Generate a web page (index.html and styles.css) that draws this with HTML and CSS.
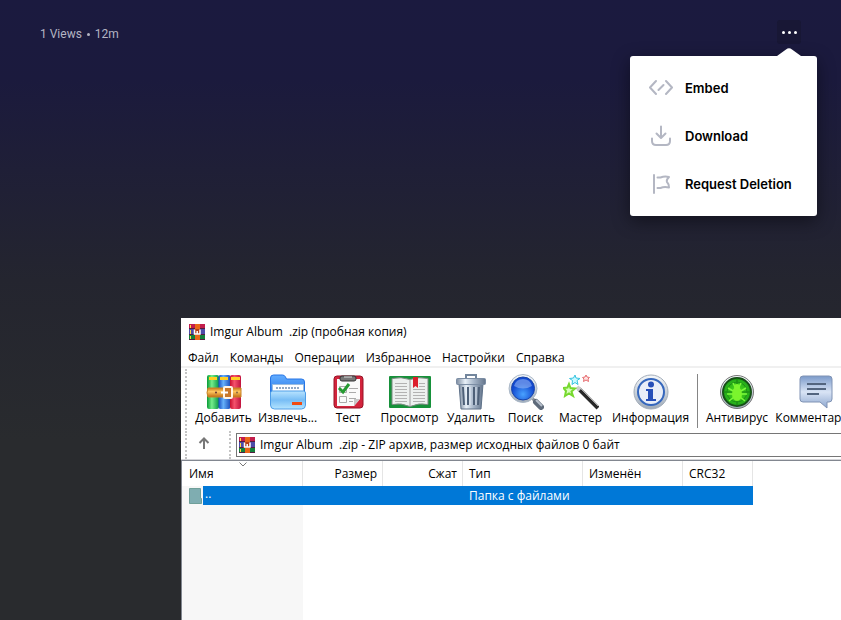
FILE: index.html
```
<!DOCTYPE html>
<html lang="ru">
<head>
<meta charset="utf-8">
<title>Imgur Album</title>
<link rel="stylesheet" href="styles.css">
</head>
<body>
<svg class="defs" aria-hidden="true">
  <defs>
    <linearGradient id="blue" x2="0" y2="1"><stop stop-color="#62adff"/><stop offset="1" stop-color="#1767df"/></linearGradient>
    <linearGradient id="sky" x2="0" y2="1"><stop stop-color="#b9e4ff"/><stop offset=".5" stop-color="#78bdf5"/><stop offset="1" stop-color="#b4e5ff"/></linearGradient>
    <linearGradient id="steel" x2="1" y2="0"><stop stop-color="#7c8b9f"/><stop offset=".3" stop-color="#e8f0f8"/><stop offset=".6" stop-color="#a6b5c8"/><stop offset="1" stop-color="#64758c"/></linearGradient>
    <linearGradient id="silver" x2="0" y2="1"><stop stop-color="#f5f8fb"/><stop offset="1" stop-color="#9fabb9"/></linearGradient>
    <linearGradient id="bubble" x2="0" y2="1"><stop stop-color="#7b9aca"/><stop offset=".5" stop-color="#d9e4f5"/><stop offset="1" stop-color="#8da7cf"/></linearGradient>
    <linearGradient id="gold" x2="0" y2="1"><stop stop-color="#c87a1a"/><stop offset=".4" stop-color="#ffc760"/><stop offset="1" stop-color="#c06c12"/></linearGradient>
    <linearGradient id="redbook" x2="1" y2="0"><stop stop-color="#c8102f"/><stop offset=".4" stop-color="#f4526c"/><stop offset="1" stop-color="#c0123d"/></linearGradient>
    <linearGradient id="greenbook" x2="1" y2="0"><stop stop-color="#079a35"/><stop offset=".4" stop-color="#75ed8b"/><stop offset="1" stop-color="#079544"/></linearGradient>
    <linearGradient id="bluebook" x2="1" y2="0"><stop stop-color="#174bc1"/><stop offset=".4" stop-color="#66b1fa"/><stop offset="1" stop-color="#1a4cba"/></linearGradient>
    <radialGradient id="lens" cy=".75"><stop stop-color="#49a2ff"/><stop offset="1" stop-color="#1148d0"/></radialGradient>
    <radialGradient id="radar"><stop stop-color="#52e31a"/><stop offset="1" stop-color="#1fa51a"/></radialGradient>
    <symbol id="archive" viewBox="0 0 16 16">
      <path fill="#c31d4c" d="M0 0h16v5H0z"/><path fill="#4c4ca9" d="M0 5h16v6H0z"/><path fill="#13813b" d="M0 11h16v5H0z"/>
      <path stroke="#541c40" d="M0 4.500h16M0 10.500h16M0 15.500h16"/>
      <path stroke="#ffdc46" d="M1.500 1v3M1.500 6v4M1.500 12v3"/>
      <path fill="#e96819" d="M6 0h5v16H6z"/><path fill="#b54018" d="M5 5h6v6H5z"/>
      <path fill="none" stroke="#fff" stroke-width="1.500" d="M5.500 5.500V10h5.500V5.500M8.200 7v3"/>
    </symbol>
  </defs>
</svg>

<header class="post-bar">
  <p class="post-meta">1 Views<span class="dot"></span>12m</p>
  <div class="post-actions">
    <button class="more" aria-label="More" aria-expanded="true"><i></i><i></i><i></i></button>
    <div class="menu">
      <svg class="menu-tip" viewBox="0 0 24 8" aria-hidden="true"><path d="M0 8 9 1.500q3-2.500 6 0L24 8z"/></svg>
      <button class="menu-item">
        <svg viewBox="0 0 24 24"><path d="M7 5 1 11.500l6 6.500M17 5l6 6.500-6 6.500M9.500 14l5-5"/></svg>Embed
      </button>
      <button class="menu-item">
        <svg viewBox="0 0 24 24"><path d="M12 2.500v11M7.500 9.500l4.500 4.500 4.500-4.500M3 14.500V17q0 4 4 4h10q4 0 4-4v-2.500"/></svg>Download
      </button>
      <button class="menu-item">
        <svg viewBox="0 0 24 24"><path d="M5 3v18M8.500 5.500h3q4-1.500 8.500-.5-3 3-2 5 2 2 2 5.500-5-1-8.500.5h-3"/></svg>Request Deletion
      </button>
    </div>
  </div>
</header>

<main class="window">
  <h1 class="title"><svg class="app-icon"><use href="#archive"/></svg>Imgur Album&nbsp; .zip (пробная копия)</h1>
  <nav class="menubar">
    <button>Файл</button><button>Команды</button><button>Операции</button><button>Избранное</button><button>Настройки</button><button>Справка</button>
  </nav>
  <div class="toolbar">
    <button><svg viewBox="0 0 36 36">
      <rect x="1" y="1" width="12" height="34" rx="2" fill="url(#greenbook)"/><rect x="12.500" y="1" width="12" height="34" rx="2" fill="url(#bluebook)"/><rect x="24" y="1" width="11" height="34" rx="2" fill="url(#redbook)"/>
      <path stroke="#ffcf24" stroke-width="3" d="M3 4.500h8M14 4.500h8M25 4.500h9"/>
      <path fill="url(#gold)" stroke="#c98328" d="M2 14q-2 5 0 9h33v-9z"/>
      <rect x="18" y="13" width="8" height="11" rx="1" fill="#c9782a" stroke="#fff4e4" stroke-width="2"/><path stroke="#fff" stroke-width="2" d="M15 18.500h7"/><circle cx="10" cy="18.500" r="1" fill="#633"/><circle cx="31" cy="18.500" r="1" fill="#864"/>
    </svg>Добавить</button>
    <button><svg viewBox="0 0 36 36">
      <path fill="url(#blue)" stroke="#2675e5" d="M.5 4q0-3 3-3h9q2 0 3 2l1 2h15q3 0 3 3v19H.5z"/>
      <path fill="#fff" stroke="#9abde0" d="M2.500 10.500h31v12h-31z"/><path stroke="#91a9c5" stroke-width="2" stroke-dasharray="2 1" d="M6 14h24"/>
      <path fill="url(#sky)" stroke="#4e9de7" d="M.5 19q0-2 2-2h31q2 0 2 2v12q0 4-4 4h-27q-4 0-4-4z"/><path stroke="#f04b12" stroke-width="3" d="M22 29.500h10"/>
    </svg>Извлечь...</button>
    <button><svg viewBox="0 0 36 36">
      <rect x="4" y="2" width="29" height="32" rx="3" fill="#d3243c" stroke="#971326"/><path fill="#fafafa" d="M7 5h23v20l-6 7H7z"/><path fill="#c7c7c7" d="M30 25h-6v7z"/>
      <rect x="10" y="2" width="16" height="5" rx="2" fill="#777" stroke="#333"/><path fill="none" stroke="#ddd" d="M14 3h8"/>
      <path fill="none" stroke="#aaa" d="M9.500 12.500h7v6h-7zM9.500 22.500h7v6h-7zM19 14.500h9M19 18.500h7M19 24.500h7M19 27.500h4"/><path fill="none" stroke="#269a32" stroke-width="3" d="m9 14 4 4 6-8"/>
    </svg>Тест</button>
    <button><svg class="wide" viewBox="0 0 42 36">
      <rect y="2" width="42" height="32" rx="1" fill="#16913a"/><path fill="#edf0ef" stroke="#7d8a82" d="M3 4.500q9-2 18 1 9-3 18-1v26q-9-2-18 2-9-4-18-2z"/>
      <path stroke="#9c9c9c" d="M21 5v27"/><path stroke="#b2b2b2" d="M6 9.500h12M6 12.500h12M6 15.500h12M6 18.500h12M6 21.500h12M6 24.500h12M6 27.500h12M24 15.500h12M24 18.500h12M24 21.500h12M24 24.500h12M24 27.500h12M30 9.500h6M30 12.500h6"/>
      <path fill="#dc1e2c" d="M24 3h5v11l-2.500-2-2.500 2z"/>
    </svg>Просмотр</button>
    <button><svg viewBox="0 0 36 36">
      <path fill="none" stroke="#73869d" stroke-width="2" d="M13 4V1h10v3"/><path fill="url(#steel)" stroke="#5e7188" d="M6 10h24l-2 25H8z"/>
      <rect x="3.500" y="4.500" width="29" height="6" rx="1" fill="url(#steel)" stroke="#7b8da4"/><path stroke="#4e6078" stroke-width="2" d="m10 13 1 18M15 13v18M21 13v18M26 13l-1 18"/><path stroke="#dce6f2" d="m12 13 1 18M17 13v18M23 13v18"/>
    </svg>Удалить</button>
    <button><svg viewBox="0 0 36 36">
      <path stroke="#8b9097" stroke-width="3" d="m24 24 4 4"/><path stroke="#5e6a7a" stroke-width="6" stroke-linecap="round" d="m28 28 5 5"/><path stroke="#b7c0cc" stroke-width="2" d="m28 26 6 6"/>
      <circle cx="15" cy="14.500" r="14" fill="url(#silver)" stroke="#aab8c8"/><circle cx="15" cy="14.500" r="11.500" fill="url(#lens)" stroke="#1a45a8"/><path fill="#9dbdf8" opacity=".55" d="M6 12q2-7 9-7t9 7q-9 5-18 0"/>
    </svg>Поиск</button>
    <button><svg viewBox="0 0 36 36">
      <path stroke="#292929" stroke-width="4" d="m16 15 19 19"/><path stroke="#aaa" stroke-width="1" d="m17 14 18 18"/><path stroke="#ccc" stroke-width="4" d="m14 13 3 3"/>
      <path fill="#d6ffba" stroke="#77d92f" stroke-width="2" d="m6 10 1.500 4 4.500.5-3.500 3 1.500 4.500-4-2.500L2 22l1-5-2.500-3 4-.5z"/>
      <path fill="#c8faff" stroke="#38c3e0" d="m12 1 1 3 4 .5-3 2 1 4-3-2-3 2 .5-4-3-2 4-.5z"/><path fill="#ffe1e1" stroke="#e66c70" d="m23 1 1 2 2.500.5L25 5l.5 2.500L23 6l-2.500 1.500L21 5l-1.500-1.500L22 3z"/>
    </svg>Мастер</button>
    <button><svg viewBox="0 0 36 36">
      <circle cx="18" cy="18" r="17" fill="url(#silver)" stroke="#a3adba"/><circle cx="18" cy="18" r="13" fill="#e9eef8" stroke="#3567bd" stroke-width="2"/><circle cx="18" cy="10.500" r="3" fill="#254eb8"/><path fill="#254eb8" d="M13 15h7v10h3v2H13v-2h2v-8h-2z"/>
    </svg>Информация</button>
    <span class="divider"></span>
    <button><svg viewBox="0 0 36 36">
      <circle cx="18" cy="18" r="16.500" fill="url(#silver)" stroke="#777"/><circle cx="18" cy="18" r="14" fill="url(#radar)" stroke="#174f17" stroke-width="2"/><path fill="none" stroke="#167e12" d="M18 4v28M4 18h28"/><circle cx="18" cy="18" r="10" fill="none" stroke="#1e9016"/>
      <path fill="none" stroke="#7dfa3c" stroke-width="1.500" d="m14 9 2 4m6-4-2 4M9 14l5 3m13-3-5 3M8 20h6m14 0h-6M10 27l5-4m11 4-5-4"/><ellipse cx="18" cy="20" rx="5" ry="7" fill="#7bf52d"/><circle cx="18" cy="13" r="3" fill="#7bf52d"/>
    </svg>Антивирус</button>
    <button><svg viewBox="0 0 36 36">
      <path fill="url(#bubble)" stroke="#8093b4" d="M5 2h26q3 0 3 3v20q0 3-3 3h-2v6l-7-6H5q-3 0-3-3V5q0-3 3-3z"/><path stroke="#53657f" stroke-width="2" d="M9 10h19M9 15h19M9 20h12"/>
    </svg>Комментарий</button>
  </div>
  <div class="address-bar">
    <button class="up" aria-label="Вверх"><svg viewBox="0 0 12 12"><path d="M6 12V2M1.500 6 6 1.500 10.500 6"/></svg></button>
    <label class="address"><svg class="app-icon"><use href="#archive"/></svg><input aria-label="Путь" value="Imgur Album&nbsp; .zip - ZIP архив, размер исходных файлов 0 байт"></label>
  </div>
  <div class="files">
    <table>
      <colgroup><col class="c-name"><col class="c-size"><col class="c-size"><col class="c-type"><col class="c-date"><col class="c-crc"></colgroup>
      <thead><tr><th>Имя<svg class="sort" viewBox="0 0 8 5"><path d="m.5.5 3.500 3.500L7.500.5"/></svg></th><th class="num">Размер</th><th class="num">Сжат</th><th>Тип</th><th>Изменён</th><th>CRC32</th></tr></thead>
      <tbody><tr><td class="name"><div><svg viewBox="0 0 13 16"><path fill="#7fadb1" stroke="#6f9f99" d="M.5.5h11v10h1v5H.5z"/></svg><span>..</span></div></td><td></td><td></td><td>Папка с файлами</td><td></td><td></td></tr></tbody>
    </table>
  </div>
</main>
</body>
</html>
```
FILE: styles.css
```
* { box-sizing: border-box; }
html { height: 100%; }
body {
  margin: 0;
  min-height: 100%;
  overflow: hidden;
  font: 12px/16px "Open Sans", "Noto Sans", sans-serif;
  color: #000;
  background: linear-gradient(#1b1a3f 0, #1b1a3d 80px, #24252f 280px, #292b2e 440px, #292b2e);
}
button { margin: 0; padding: 0; border: 0; background: none; font: inherit; color: inherit; white-space: nowrap; }
.defs { position: absolute; width: 0; height: 0; }

.post-bar { display: flex; justify-content: space-between; align-items: center; padding: 20px 40px; }
.post-meta { display: flex; align-items: center; gap: 5px; margin: 0; padding-top: 4px; font: 12px/16px Roboto, sans-serif; color: #b4b5c3; }
.dot { width: 3px; height: 3px; border-radius: 50%; background: #b4b5c3; }
.post-actions { position: relative; }
.more { display: flex; align-items: center; justify-content: center; gap: 3px; width: 24px; height: 24px; border-radius: 3px; background: #181735; }
.more i { width: 3px; height: 3px; border-radius: 50%; background: #fff; }
.menu {
  position: absolute; top: 36px; right: -16px; width: 187px; padding: 8px 0;
  border-radius: 3px; background: #fff; box-shadow: 0 5px 18px rgba(0, 0, 0, .45);
}
.menu-tip { position: absolute; top: -8px; right: 16px; width: 24px; height: 8px; fill: #fff; }
.menu-item { display: flex; align-items: center; gap: 12px; width: 100%; height: 48px; padding: 0 19px; font: 600 13px/20px Inter, sans-serif; }
.menu-item svg { width: 24px; height: 24px; fill: none; stroke: #b4b7c3; stroke-width: 2; stroke-linecap: round; stroke-linejoin: round; }

.window { position: absolute; top: 318px; right: 0; bottom: 0; left: 181px; display: flex; flex-direction: column; overflow: hidden; background: #fff; }
.app-icon { flex: none; width: 16px; height: 16px; }
.title { display: flex; align-items: center; gap: 5px; margin: 0; padding: 0 8px; height: 28px; font-size: 12px; font-weight: 400; }
.menubar { display: flex; gap: 11px; height: 22px; padding: 3px 7px 0; border-bottom: 2px solid #f0f0f0; }
.toolbar {
  position: relative; flex: none; display: grid;
  grid-template-columns: 53px 55px 46px 57px 46px 43px 47px 73px 1px 58px 80px;
  column-gap: 10px; justify-items: center; height: 62px; padding: 6px 0 0 16px;
}
.toolbar::before, .address-bar::before, .address-bar::after { content: ""; position: absolute; left: 4px; top: 1px; bottom: 0; border-left: 2px dotted #c4c4c4; }
.toolbar button { display: flex; flex-direction: column; align-items: center; width: 0; }
.toolbar svg { flex: none; width: 36px; height: 36px; }
.toolbar .wide { width: 42px; }
.divider { width: 1px; height: 54px; background: #858585; }
.address-bar { position: relative; flex: none; display: flex; align-items: center; height: 30px; padding: 3px 0 2px 16px; border-bottom: 1px solid #d4d4d8; }
.address-bar::after { left: 48px; }
.up { width: 39px; height: 24px; padding-right: 26px; }
.up svg { width: 12px; height: 12px; fill: none; stroke: #777; stroke-width: 2; }
.address { flex: 1; display: flex; align-items: center; gap: 5px; height: 24px; padding-left: 2px; border: 1px solid #767676; border-right: 0; }
.address input { flex: 1; min-width: 0; padding: 0; border: 0; outline: 0; font: inherit; color: inherit; background: none; }

.files { flex: 1; border-top: 1px solid #828790; border-left: 1px solid #828790; background: linear-gradient(90deg, #f7f7f7 121px, #fff 121px); }
table { width: 571px; table-layout: fixed; border-collapse: separate; border-spacing: 0; }
.c-name { width: 121px; }
.c-size { width: 80px; }
.c-type { width: 120px; }
.c-date { width: 100px; }
.c-crc { width: 70px; }
th { position: relative; height: 25px; padding: 0 6px; border-right: 1px solid #e5e5e5; background: #fff; font-weight: 400; text-align: left; }
th:first-child { padding-left: 7px; }
th.num { padding-right: 5px; text-align: right; }
.sort { position: absolute; top: 1px; left: 57px; width: 8px; height: 5px; fill: none; stroke: #777; }
td { height: 19px; padding: 0 6px; background: #0078d7; color: #fff; }
td.name { padding: 0; background: none; }
.name div { display: flex; align-items: center; gap: 1px; padding-left: 7px; }
.name svg { width: 13px; height: 16px; }
.name span { flex: 1; height: 19px; padding-left: 2px; background: #0078d7; }
```
